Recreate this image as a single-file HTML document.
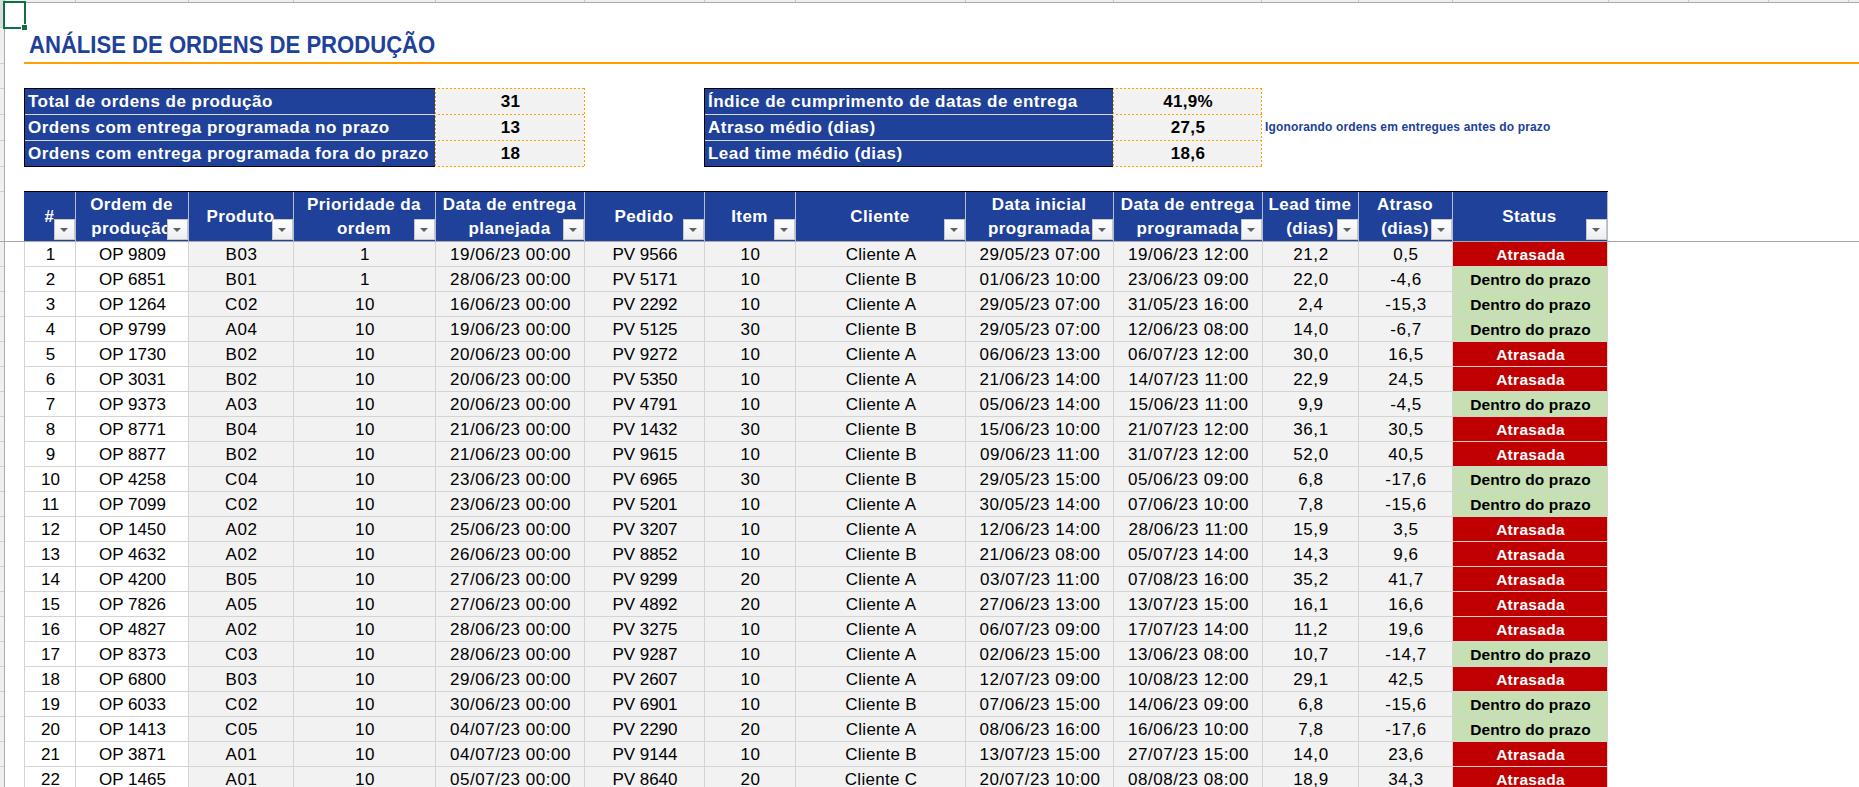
<!DOCTYPE html>
<html><head><meta charset="utf-8"><style>
html,body{margin:0;padding:0;background:#fff;}
body{width:1859px;height:787px;position:relative;overflow:hidden;font-family:"Liberation Sans", sans-serif;}
div{position:absolute;box-sizing:border-box;}
.t{white-space:pre;text-align:center;}
.title{font-weight:bold;font-size:23.5px;color:#20419a;white-space:pre;transform:scaleX(0.94);transform-origin:0 50%;}
.lab{font-weight:bold;font-size:17px;color:#fff;letter-spacing:0.47px;white-space:pre;}
.val{font-weight:bold;font-size:17px;color:#000;letter-spacing:0.3px;white-space:pre;text-align:center;}
.note{font-weight:bold;font-size:12px;color:#20419a;letter-spacing:0.15px;white-space:pre;}
.hd{font-weight:bold;font-size:17px;color:#fff;letter-spacing:0.4px;white-space:pre;text-align:center;line-height:24px;}
.d{font-size:17px;color:#000;letter-spacing:0.55px;white-space:pre;text-align:center;}
.da{font-size:17px;color:#000;white-space:pre;text-align:center;}
.st{font-weight:bold;font-size:15.5px;letter-spacing:0.3px;white-space:pre;text-align:center;}
.dash-h{height:1px;background:repeating-linear-gradient(90deg,#ffa000 0 1px,transparent 1px 3px,#ffa000 3px 4px);}
.dash-v{width:1px;background:repeating-linear-gradient(180deg,#ffa000 0 2px,transparent 2px 4px);}
.fb{width:21px;height:21px;border:1px solid #c6c6c6;background:linear-gradient(#ffffff,#eceef2);}
.fb::after{content:"";position:absolute;left:5px;top:7.5px;width:0;height:0;border-left:4px solid transparent;border-right:4px solid transparent;border-top:4.5px solid #606060;}
</style></head>
<body>
<div style="left:0px;top:0px;width:1859px;height:2px;background:#efefef"></div>
<div style="left:0px;top:2px;width:1859px;height:1px;background:#ababab"></div>
<div style="left:75px;top:0px;width:1px;height:2px;background:#c8c8c8"></div>
<div style="left:188px;top:0px;width:1px;height:2px;background:#c8c8c8"></div>
<div style="left:293px;top:0px;width:1px;height:2px;background:#c8c8c8"></div>
<div style="left:435px;top:0px;width:1px;height:2px;background:#c8c8c8"></div>
<div style="left:584px;top:0px;width:1px;height:2px;background:#c8c8c8"></div>
<div style="left:704px;top:0px;width:1px;height:2px;background:#c8c8c8"></div>
<div style="left:795px;top:0px;width:1px;height:2px;background:#c8c8c8"></div>
<div style="left:965px;top:0px;width:1px;height:2px;background:#c8c8c8"></div>
<div style="left:1113px;top:0px;width:1px;height:2px;background:#c8c8c8"></div>
<div style="left:1261px;top:0px;width:1px;height:2px;background:#c8c8c8"></div>
<div style="left:1358px;top:0px;width:1px;height:2px;background:#c8c8c8"></div>
<div style="left:1452px;top:0px;width:1px;height:2px;background:#c8c8c8"></div>
<div style="left:1608px;top:0px;width:1px;height:2px;background:#c8c8c8"></div>
<div style="left:1688px;top:0px;width:1px;height:2px;background:#c8c8c8"></div>
<div style="left:1768px;top:0px;width:1px;height:2px;background:#c8c8c8"></div>
<div style="left:1848px;top:0px;width:1px;height:2px;background:#c8c8c8"></div>
<div style="left:0px;top:0px;width:4px;height:787px;background:#efefef"></div>
<div style="left:0px;top:0px;width:4px;height:27px;background:#dcdcdc"></div>
<div style="left:0px;top:27px;width:4px;height:1px;background:#d0d0d0"></div>
<div style="left:0px;top:63px;width:4px;height:1px;background:#d0d0d0"></div>
<div style="left:0px;top:88px;width:4px;height:1px;background:#d0d0d0"></div>
<div style="left:0px;top:114px;width:4px;height:1px;background:#d0d0d0"></div>
<div style="left:0px;top:140px;width:4px;height:1px;background:#d0d0d0"></div>
<div style="left:0px;top:166px;width:4px;height:1px;background:#d0d0d0"></div>
<div style="left:0px;top:191px;width:4px;height:1px;background:#d0d0d0"></div>
<div style="left:0px;top:266px;width:4px;height:1px;background:#d0d0d0"></div>
<div style="left:0px;top:291px;width:4px;height:1px;background:#d0d0d0"></div>
<div style="left:0px;top:316px;width:4px;height:1px;background:#d0d0d0"></div>
<div style="left:0px;top:341px;width:4px;height:1px;background:#d0d0d0"></div>
<div style="left:0px;top:366px;width:4px;height:1px;background:#d0d0d0"></div>
<div style="left:0px;top:391px;width:4px;height:1px;background:#d0d0d0"></div>
<div style="left:0px;top:416px;width:4px;height:1px;background:#d0d0d0"></div>
<div style="left:0px;top:441px;width:4px;height:1px;background:#d0d0d0"></div>
<div style="left:0px;top:466px;width:4px;height:1px;background:#d0d0d0"></div>
<div style="left:0px;top:491px;width:4px;height:1px;background:#d0d0d0"></div>
<div style="left:0px;top:516px;width:4px;height:1px;background:#d0d0d0"></div>
<div style="left:0px;top:541px;width:4px;height:1px;background:#d0d0d0"></div>
<div style="left:0px;top:566px;width:4px;height:1px;background:#d0d0d0"></div>
<div style="left:0px;top:591px;width:4px;height:1px;background:#d0d0d0"></div>
<div style="left:0px;top:616px;width:4px;height:1px;background:#d0d0d0"></div>
<div style="left:0px;top:641px;width:4px;height:1px;background:#d0d0d0"></div>
<div style="left:0px;top:666px;width:4px;height:1px;background:#d0d0d0"></div>
<div style="left:0px;top:691px;width:4px;height:1px;background:#d0d0d0"></div>
<div style="left:0px;top:716px;width:4px;height:1px;background:#d0d0d0"></div>
<div style="left:0px;top:741px;width:4px;height:1px;background:#d0d0d0"></div>
<div style="left:0px;top:766px;width:4px;height:1px;background:#d0d0d0"></div>
<div style="left:4px;top:0px;width:1px;height:787px;background:#ababab"></div>
<div class="title" style="left:29px;top:28px;width:700px;height:35px;line-height:35px;">ANÁLISE DE ORDENS DE PRODUÇÃO</div>
<div style="left:24px;top:62px;width:1835px;height:2px;background:#ffa000"></div>
<div style="left:24px;top:88px;width:411px;height:79px;background:#20419a"></div>
<div style="left:24px;top:88px;width:411px;height:1px;background:#000"></div>
<div style="left:24px;top:166px;width:411px;height:1px;background:#000"></div>
<div style="left:24px;top:88px;width:1px;height:79px;background:#000"></div>
<div style="left:25px;top:114px;width:410px;height:1px;background:#d8d8e0"></div>
<div style="left:25px;top:140px;width:410px;height:1px;background:#d8d8e0"></div>
<div style="left:435px;top:88px;width:149px;height:79px;background:#f2f2f2"></div>
<div class="dash-h" style="left:435px;top:88px;width:150px"></div>
<div class="dash-h" style="left:435px;top:114px;width:150px"></div>
<div class="dash-h" style="left:435px;top:140px;width:150px"></div>
<div class="dash-h" style="left:435px;top:166px;width:150px"></div>
<div class="dash-v" style="left:435px;top:88px;height:79px;background-color:#fff"></div>
<div class="dash-v" style="left:584px;top:88px;height:79px"></div>
<div class="lab" style="left:28px;top:89px;width:407px;height:25px;line-height:25px;">Total de ordens de produção</div>
<div class="val" style="left:436px;top:89px;width:149px;height:25px;line-height:25px;">31</div>
<div class="lab" style="left:28px;top:115px;width:407px;height:25px;line-height:25px;">Ordens com entrega programada no prazo</div>
<div class="val" style="left:436px;top:115px;width:149px;height:25px;line-height:25px;">13</div>
<div class="lab" style="left:28px;top:141px;width:407px;height:25px;line-height:25px;">Ordens com entrega programada fora do prazo</div>
<div class="val" style="left:436px;top:141px;width:149px;height:25px;line-height:25px;">18</div>
<div style="left:704px;top:88px;width:409px;height:79px;background:#20419a"></div>
<div style="left:704px;top:88px;width:409px;height:1px;background:#000"></div>
<div style="left:704px;top:166px;width:409px;height:1px;background:#000"></div>
<div style="left:704px;top:88px;width:1px;height:79px;background:#000"></div>
<div style="left:705px;top:114px;width:408px;height:1px;background:#d8d8e0"></div>
<div style="left:705px;top:140px;width:408px;height:1px;background:#d8d8e0"></div>
<div style="left:1113px;top:88px;width:148px;height:79px;background:#f2f2f2"></div>
<div class="dash-h" style="left:1113px;top:88px;width:149px"></div>
<div class="dash-h" style="left:1113px;top:114px;width:149px"></div>
<div class="dash-h" style="left:1113px;top:140px;width:149px"></div>
<div class="dash-h" style="left:1113px;top:166px;width:149px"></div>
<div class="dash-v" style="left:1113px;top:88px;height:79px;background-color:#fff"></div>
<div class="dash-v" style="left:1261px;top:88px;height:79px"></div>
<div class="lab" style="left:708px;top:89px;width:405px;height:25px;line-height:25px;">Índice de cumprimento de datas de entrega</div>
<div class="val" style="left:1114px;top:89px;width:148px;height:25px;line-height:25px;">41,9%</div>
<div class="lab" style="left:708px;top:115px;width:405px;height:25px;line-height:25px;">Atraso médio (dias)</div>
<div class="val" style="left:1114px;top:115px;width:148px;height:25px;line-height:25px;">27,5</div>
<div class="lab" style="left:708px;top:141px;width:405px;height:25px;line-height:25px;">Lead time médio (dias)</div>
<div class="val" style="left:1114px;top:141px;width:148px;height:25px;line-height:25px;">18,6</div>
<div class="note" style="left:1265px;top:114px;width:400px;height:26px;line-height:26px;">Igonorando ordens em entregues antes do prazo</div>
<div style="left:0px;top:241px;width:1859px;height:1px;background:#a8a8a8"></div>
<div style="left:24px;top:191px;width:1584px;height:1px;background:#000"></div>
<div style="left:1607px;top:192px;width:1px;height:49px;background:#b4bcd6"></div>
<div style="left:24px;top:192px;width:1583px;height:49px;background:#20419a"></div>
<div class="hd" style="left:24px;top:193px;width:51px;height:48px;line-height:48px;line-height:48px">#</div>
<div class="fb" style="left:54px;top:219px"></div>
<div style="left:75px;top:192px;width:1px;height:49px;background:#b4bcd6"></div>
<div class="hd" style="left:75px;top:193px;width:113px;height:48px;line-height:48px;line-height:24px">Ordem de
produção</div>
<div class="fb" style="left:167px;top:219px"></div>
<div style="left:188px;top:192px;width:1px;height:49px;background:#b4bcd6"></div>
<div class="hd" style="left:188px;top:193px;width:105px;height:48px;line-height:48px;line-height:48px">Produto</div>
<div class="fb" style="left:272px;top:219px"></div>
<div style="left:293px;top:192px;width:1px;height:49px;background:#b4bcd6"></div>
<div class="hd" style="left:293px;top:193px;width:142px;height:48px;line-height:48px;line-height:24px">Prioridade da
ordem</div>
<div class="fb" style="left:414px;top:219px"></div>
<div style="left:435px;top:192px;width:1px;height:49px;background:#b4bcd6"></div>
<div class="hd" style="left:435px;top:193px;width:149px;height:48px;line-height:48px;line-height:24px">Data de entrega
planejada</div>
<div class="fb" style="left:563px;top:219px"></div>
<div style="left:584px;top:192px;width:1px;height:49px;background:#b4bcd6"></div>
<div class="hd" style="left:584px;top:193px;width:120px;height:48px;line-height:48px;line-height:48px">Pedido</div>
<div class="fb" style="left:683px;top:219px"></div>
<div style="left:704px;top:192px;width:1px;height:49px;background:#b4bcd6"></div>
<div class="hd" style="left:704px;top:193px;width:91px;height:48px;line-height:48px;line-height:48px">Item</div>
<div class="fb" style="left:774px;top:219px"></div>
<div style="left:795px;top:192px;width:1px;height:49px;background:#b4bcd6"></div>
<div class="hd" style="left:795px;top:193px;width:170px;height:48px;line-height:48px;line-height:48px">Cliente</div>
<div class="fb" style="left:944px;top:219px"></div>
<div style="left:965px;top:192px;width:1px;height:49px;background:#b4bcd6"></div>
<div class="hd" style="left:965px;top:193px;width:148px;height:48px;line-height:48px;line-height:24px">Data inicial
programada</div>
<div class="fb" style="left:1092px;top:219px"></div>
<div style="left:1113px;top:192px;width:1px;height:49px;background:#b4bcd6"></div>
<div class="hd" style="left:1113px;top:193px;width:149px;height:48px;line-height:48px;line-height:24px">Data de entrega
programada</div>
<div class="fb" style="left:1241px;top:219px"></div>
<div style="left:1262px;top:192px;width:1px;height:49px;background:#b4bcd6"></div>
<div class="hd" style="left:1262px;top:193px;width:96px;height:48px;line-height:48px;line-height:24px">Lead time
(dias)</div>
<div class="fb" style="left:1337px;top:219px"></div>
<div style="left:1358px;top:192px;width:1px;height:49px;background:#b4bcd6"></div>
<div class="hd" style="left:1358px;top:193px;width:94px;height:48px;line-height:48px;line-height:24px">Atraso
(dias)</div>
<div class="fb" style="left:1431px;top:219px"></div>
<div style="left:1452px;top:192px;width:1px;height:49px;background:#b4bcd6"></div>
<div class="hd" style="left:1452px;top:193px;width:155px;height:48px;line-height:48px;line-height:48px">Status</div>
<div class="fb" style="left:1586px;top:219px"></div>
<div style="left:25px;top:242px;width:50px;height:24px;background:#fff"></div>
<div class="da" style="left:25px;top:243px;width:51px;height:24px;line-height:24px;">1</div>
<div style="left:76px;top:242px;width:112px;height:24px;background:#fff"></div>
<div class="da" style="left:76px;top:243px;width:113px;height:24px;line-height:24px;">OP 9809</div>
<div style="left:189px;top:242px;width:104px;height:24px;background:#f2f2f2"></div>
<div class="d" style="left:189px;top:243px;width:105px;height:24px;line-height:24px;">B03</div>
<div style="left:294px;top:242px;width:141px;height:24px;background:#f2f2f2"></div>
<div class="d" style="left:294px;top:243px;width:142px;height:24px;line-height:24px;">1</div>
<div style="left:436px;top:242px;width:148px;height:24px;background:#f2f2f2"></div>
<div class="d" style="left:436px;top:243px;width:149px;height:24px;line-height:24px;">19/06/23 00:00</div>
<div style="left:585px;top:242px;width:119px;height:24px;background:#f2f2f2"></div>
<div class="d" style="left:585px;top:243px;width:120px;height:24px;line-height:24px;letter-spacing:-0.05px">PV 9566</div>
<div style="left:705px;top:242px;width:90px;height:24px;background:#f2f2f2"></div>
<div class="d" style="left:705px;top:243px;width:91px;height:24px;line-height:24px;">10</div>
<div style="left:796px;top:242px;width:169px;height:24px;background:#f2f2f2"></div>
<div class="d" style="left:796px;top:243px;width:170px;height:24px;line-height:24px;letter-spacing:0.28px">Cliente A</div>
<div style="left:966px;top:242px;width:147px;height:24px;background:#f2f2f2"></div>
<div class="d" style="left:966px;top:243px;width:148px;height:24px;line-height:24px;">29/05/23 07:00</div>
<div style="left:1114px;top:242px;width:148px;height:24px;background:#f2f2f2"></div>
<div class="d" style="left:1114px;top:243px;width:149px;height:24px;line-height:24px;">19/06/23 12:00</div>
<div style="left:1263px;top:242px;width:95px;height:24px;background:#f2f2f2"></div>
<div class="d" style="left:1263px;top:243px;width:96px;height:24px;line-height:24px;">21,2</div>
<div style="left:1359px;top:242px;width:93px;height:24px;background:#f2f2f2"></div>
<div class="d" style="left:1359px;top:243px;width:94px;height:24px;line-height:24px;">0,5</div>
<div style="left:1453px;top:242px;width:154px;height:24px;background:#c00000"></div>
<div class="st" style="left:1453px;top:243px;width:155px;height:24px;line-height:24px;color:#fff">Atrasada</div>
<div style="left:24px;top:266px;width:1584px;height:1px;background:#d4d4d4"></div>
<div style="left:25px;top:267px;width:50px;height:24px;background:#fff"></div>
<div class="da" style="left:25px;top:268px;width:51px;height:24px;line-height:24px;">2</div>
<div style="left:76px;top:267px;width:112px;height:24px;background:#fff"></div>
<div class="da" style="left:76px;top:268px;width:113px;height:24px;line-height:24px;">OP 6851</div>
<div style="left:189px;top:267px;width:104px;height:24px;background:#f2f2f2"></div>
<div class="d" style="left:189px;top:268px;width:105px;height:24px;line-height:24px;">B01</div>
<div style="left:294px;top:267px;width:141px;height:24px;background:#f2f2f2"></div>
<div class="d" style="left:294px;top:268px;width:142px;height:24px;line-height:24px;">1</div>
<div style="left:436px;top:267px;width:148px;height:24px;background:#f2f2f2"></div>
<div class="d" style="left:436px;top:268px;width:149px;height:24px;line-height:24px;">28/06/23 00:00</div>
<div style="left:585px;top:267px;width:119px;height:24px;background:#f2f2f2"></div>
<div class="d" style="left:585px;top:268px;width:120px;height:24px;line-height:24px;letter-spacing:-0.05px">PV 5171</div>
<div style="left:705px;top:267px;width:90px;height:24px;background:#f2f2f2"></div>
<div class="d" style="left:705px;top:268px;width:91px;height:24px;line-height:24px;">10</div>
<div style="left:796px;top:267px;width:169px;height:24px;background:#f2f2f2"></div>
<div class="d" style="left:796px;top:268px;width:170px;height:24px;line-height:24px;letter-spacing:0.28px">Cliente B</div>
<div style="left:966px;top:267px;width:147px;height:24px;background:#f2f2f2"></div>
<div class="d" style="left:966px;top:268px;width:148px;height:24px;line-height:24px;">01/06/23 10:00</div>
<div style="left:1114px;top:267px;width:148px;height:24px;background:#f2f2f2"></div>
<div class="d" style="left:1114px;top:268px;width:149px;height:24px;line-height:24px;">23/06/23 09:00</div>
<div style="left:1263px;top:267px;width:95px;height:24px;background:#f2f2f2"></div>
<div class="d" style="left:1263px;top:268px;width:96px;height:24px;line-height:24px;">22,0</div>
<div style="left:1359px;top:267px;width:93px;height:24px;background:#f2f2f2"></div>
<div class="d" style="left:1359px;top:268px;width:94px;height:24px;line-height:24px;">-4,6</div>
<div style="left:1453px;top:267px;width:154px;height:24px;background:#c6e0b4"></div>
<div class="st" style="left:1453px;top:268px;width:155px;height:24px;line-height:24px;color:#000;letter-spacing:0.12px">Dentro do prazo</div>
<div style="left:24px;top:291px;width:1584px;height:1px;background:#d4d4d4"></div>
<div style="left:25px;top:292px;width:50px;height:24px;background:#fff"></div>
<div class="da" style="left:25px;top:293px;width:51px;height:24px;line-height:24px;">3</div>
<div style="left:76px;top:292px;width:112px;height:24px;background:#fff"></div>
<div class="da" style="left:76px;top:293px;width:113px;height:24px;line-height:24px;">OP 1264</div>
<div style="left:189px;top:292px;width:104px;height:24px;background:#f2f2f2"></div>
<div class="d" style="left:189px;top:293px;width:105px;height:24px;line-height:24px;">C02</div>
<div style="left:294px;top:292px;width:141px;height:24px;background:#f2f2f2"></div>
<div class="d" style="left:294px;top:293px;width:142px;height:24px;line-height:24px;">10</div>
<div style="left:436px;top:292px;width:148px;height:24px;background:#f2f2f2"></div>
<div class="d" style="left:436px;top:293px;width:149px;height:24px;line-height:24px;">16/06/23 00:00</div>
<div style="left:585px;top:292px;width:119px;height:24px;background:#f2f2f2"></div>
<div class="d" style="left:585px;top:293px;width:120px;height:24px;line-height:24px;letter-spacing:-0.05px">PV 2292</div>
<div style="left:705px;top:292px;width:90px;height:24px;background:#f2f2f2"></div>
<div class="d" style="left:705px;top:293px;width:91px;height:24px;line-height:24px;">10</div>
<div style="left:796px;top:292px;width:169px;height:24px;background:#f2f2f2"></div>
<div class="d" style="left:796px;top:293px;width:170px;height:24px;line-height:24px;letter-spacing:0.28px">Cliente A</div>
<div style="left:966px;top:292px;width:147px;height:24px;background:#f2f2f2"></div>
<div class="d" style="left:966px;top:293px;width:148px;height:24px;line-height:24px;">29/05/23 07:00</div>
<div style="left:1114px;top:292px;width:148px;height:24px;background:#f2f2f2"></div>
<div class="d" style="left:1114px;top:293px;width:149px;height:24px;line-height:24px;">31/05/23 16:00</div>
<div style="left:1263px;top:292px;width:95px;height:24px;background:#f2f2f2"></div>
<div class="d" style="left:1263px;top:293px;width:96px;height:24px;line-height:24px;">2,4</div>
<div style="left:1359px;top:292px;width:93px;height:24px;background:#f2f2f2"></div>
<div class="d" style="left:1359px;top:293px;width:94px;height:24px;line-height:24px;">-15,3</div>
<div style="left:1453px;top:292px;width:154px;height:24px;background:#c6e0b4"></div>
<div class="st" style="left:1453px;top:293px;width:155px;height:24px;line-height:24px;color:#000;letter-spacing:0.12px">Dentro do prazo</div>
<div style="left:24px;top:316px;width:1584px;height:1px;background:#d4d4d4"></div>
<div style="left:25px;top:317px;width:50px;height:24px;background:#fff"></div>
<div class="da" style="left:25px;top:318px;width:51px;height:24px;line-height:24px;">4</div>
<div style="left:76px;top:317px;width:112px;height:24px;background:#fff"></div>
<div class="da" style="left:76px;top:318px;width:113px;height:24px;line-height:24px;">OP 9799</div>
<div style="left:189px;top:317px;width:104px;height:24px;background:#f2f2f2"></div>
<div class="d" style="left:189px;top:318px;width:105px;height:24px;line-height:24px;">A04</div>
<div style="left:294px;top:317px;width:141px;height:24px;background:#f2f2f2"></div>
<div class="d" style="left:294px;top:318px;width:142px;height:24px;line-height:24px;">10</div>
<div style="left:436px;top:317px;width:148px;height:24px;background:#f2f2f2"></div>
<div class="d" style="left:436px;top:318px;width:149px;height:24px;line-height:24px;">19/06/23 00:00</div>
<div style="left:585px;top:317px;width:119px;height:24px;background:#f2f2f2"></div>
<div class="d" style="left:585px;top:318px;width:120px;height:24px;line-height:24px;letter-spacing:-0.05px">PV 5125</div>
<div style="left:705px;top:317px;width:90px;height:24px;background:#f2f2f2"></div>
<div class="d" style="left:705px;top:318px;width:91px;height:24px;line-height:24px;">30</div>
<div style="left:796px;top:317px;width:169px;height:24px;background:#f2f2f2"></div>
<div class="d" style="left:796px;top:318px;width:170px;height:24px;line-height:24px;letter-spacing:0.28px">Cliente B</div>
<div style="left:966px;top:317px;width:147px;height:24px;background:#f2f2f2"></div>
<div class="d" style="left:966px;top:318px;width:148px;height:24px;line-height:24px;">29/05/23 07:00</div>
<div style="left:1114px;top:317px;width:148px;height:24px;background:#f2f2f2"></div>
<div class="d" style="left:1114px;top:318px;width:149px;height:24px;line-height:24px;">12/06/23 08:00</div>
<div style="left:1263px;top:317px;width:95px;height:24px;background:#f2f2f2"></div>
<div class="d" style="left:1263px;top:318px;width:96px;height:24px;line-height:24px;">14,0</div>
<div style="left:1359px;top:317px;width:93px;height:24px;background:#f2f2f2"></div>
<div class="d" style="left:1359px;top:318px;width:94px;height:24px;line-height:24px;">-6,7</div>
<div style="left:1453px;top:317px;width:154px;height:24px;background:#c6e0b4"></div>
<div class="st" style="left:1453px;top:318px;width:155px;height:24px;line-height:24px;color:#000;letter-spacing:0.12px">Dentro do prazo</div>
<div style="left:24px;top:341px;width:1584px;height:1px;background:#d4d4d4"></div>
<div style="left:25px;top:342px;width:50px;height:24px;background:#fff"></div>
<div class="da" style="left:25px;top:343px;width:51px;height:24px;line-height:24px;">5</div>
<div style="left:76px;top:342px;width:112px;height:24px;background:#fff"></div>
<div class="da" style="left:76px;top:343px;width:113px;height:24px;line-height:24px;">OP 1730</div>
<div style="left:189px;top:342px;width:104px;height:24px;background:#f2f2f2"></div>
<div class="d" style="left:189px;top:343px;width:105px;height:24px;line-height:24px;">B02</div>
<div style="left:294px;top:342px;width:141px;height:24px;background:#f2f2f2"></div>
<div class="d" style="left:294px;top:343px;width:142px;height:24px;line-height:24px;">10</div>
<div style="left:436px;top:342px;width:148px;height:24px;background:#f2f2f2"></div>
<div class="d" style="left:436px;top:343px;width:149px;height:24px;line-height:24px;">20/06/23 00:00</div>
<div style="left:585px;top:342px;width:119px;height:24px;background:#f2f2f2"></div>
<div class="d" style="left:585px;top:343px;width:120px;height:24px;line-height:24px;letter-spacing:-0.05px">PV 9272</div>
<div style="left:705px;top:342px;width:90px;height:24px;background:#f2f2f2"></div>
<div class="d" style="left:705px;top:343px;width:91px;height:24px;line-height:24px;">10</div>
<div style="left:796px;top:342px;width:169px;height:24px;background:#f2f2f2"></div>
<div class="d" style="left:796px;top:343px;width:170px;height:24px;line-height:24px;letter-spacing:0.28px">Cliente A</div>
<div style="left:966px;top:342px;width:147px;height:24px;background:#f2f2f2"></div>
<div class="d" style="left:966px;top:343px;width:148px;height:24px;line-height:24px;">06/06/23 13:00</div>
<div style="left:1114px;top:342px;width:148px;height:24px;background:#f2f2f2"></div>
<div class="d" style="left:1114px;top:343px;width:149px;height:24px;line-height:24px;">06/07/23 12:00</div>
<div style="left:1263px;top:342px;width:95px;height:24px;background:#f2f2f2"></div>
<div class="d" style="left:1263px;top:343px;width:96px;height:24px;line-height:24px;">30,0</div>
<div style="left:1359px;top:342px;width:93px;height:24px;background:#f2f2f2"></div>
<div class="d" style="left:1359px;top:343px;width:94px;height:24px;line-height:24px;">16,5</div>
<div style="left:1453px;top:342px;width:154px;height:24px;background:#c00000"></div>
<div class="st" style="left:1453px;top:343px;width:155px;height:24px;line-height:24px;color:#fff">Atrasada</div>
<div style="left:24px;top:366px;width:1584px;height:1px;background:#d4d4d4"></div>
<div style="left:25px;top:367px;width:50px;height:24px;background:#fff"></div>
<div class="da" style="left:25px;top:368px;width:51px;height:24px;line-height:24px;">6</div>
<div style="left:76px;top:367px;width:112px;height:24px;background:#fff"></div>
<div class="da" style="left:76px;top:368px;width:113px;height:24px;line-height:24px;">OP 3031</div>
<div style="left:189px;top:367px;width:104px;height:24px;background:#f2f2f2"></div>
<div class="d" style="left:189px;top:368px;width:105px;height:24px;line-height:24px;">B02</div>
<div style="left:294px;top:367px;width:141px;height:24px;background:#f2f2f2"></div>
<div class="d" style="left:294px;top:368px;width:142px;height:24px;line-height:24px;">10</div>
<div style="left:436px;top:367px;width:148px;height:24px;background:#f2f2f2"></div>
<div class="d" style="left:436px;top:368px;width:149px;height:24px;line-height:24px;">20/06/23 00:00</div>
<div style="left:585px;top:367px;width:119px;height:24px;background:#f2f2f2"></div>
<div class="d" style="left:585px;top:368px;width:120px;height:24px;line-height:24px;letter-spacing:-0.05px">PV 5350</div>
<div style="left:705px;top:367px;width:90px;height:24px;background:#f2f2f2"></div>
<div class="d" style="left:705px;top:368px;width:91px;height:24px;line-height:24px;">10</div>
<div style="left:796px;top:367px;width:169px;height:24px;background:#f2f2f2"></div>
<div class="d" style="left:796px;top:368px;width:170px;height:24px;line-height:24px;letter-spacing:0.28px">Cliente A</div>
<div style="left:966px;top:367px;width:147px;height:24px;background:#f2f2f2"></div>
<div class="d" style="left:966px;top:368px;width:148px;height:24px;line-height:24px;">21/06/23 14:00</div>
<div style="left:1114px;top:367px;width:148px;height:24px;background:#f2f2f2"></div>
<div class="d" style="left:1114px;top:368px;width:149px;height:24px;line-height:24px;">14/07/23 11:00</div>
<div style="left:1263px;top:367px;width:95px;height:24px;background:#f2f2f2"></div>
<div class="d" style="left:1263px;top:368px;width:96px;height:24px;line-height:24px;">22,9</div>
<div style="left:1359px;top:367px;width:93px;height:24px;background:#f2f2f2"></div>
<div class="d" style="left:1359px;top:368px;width:94px;height:24px;line-height:24px;">24,5</div>
<div style="left:1453px;top:367px;width:154px;height:24px;background:#c00000"></div>
<div class="st" style="left:1453px;top:368px;width:155px;height:24px;line-height:24px;color:#fff">Atrasada</div>
<div style="left:24px;top:391px;width:1584px;height:1px;background:#d4d4d4"></div>
<div style="left:25px;top:392px;width:50px;height:24px;background:#fff"></div>
<div class="da" style="left:25px;top:393px;width:51px;height:24px;line-height:24px;">7</div>
<div style="left:76px;top:392px;width:112px;height:24px;background:#fff"></div>
<div class="da" style="left:76px;top:393px;width:113px;height:24px;line-height:24px;">OP 9373</div>
<div style="left:189px;top:392px;width:104px;height:24px;background:#f2f2f2"></div>
<div class="d" style="left:189px;top:393px;width:105px;height:24px;line-height:24px;">A03</div>
<div style="left:294px;top:392px;width:141px;height:24px;background:#f2f2f2"></div>
<div class="d" style="left:294px;top:393px;width:142px;height:24px;line-height:24px;">10</div>
<div style="left:436px;top:392px;width:148px;height:24px;background:#f2f2f2"></div>
<div class="d" style="left:436px;top:393px;width:149px;height:24px;line-height:24px;">20/06/23 00:00</div>
<div style="left:585px;top:392px;width:119px;height:24px;background:#f2f2f2"></div>
<div class="d" style="left:585px;top:393px;width:120px;height:24px;line-height:24px;letter-spacing:-0.05px">PV 4791</div>
<div style="left:705px;top:392px;width:90px;height:24px;background:#f2f2f2"></div>
<div class="d" style="left:705px;top:393px;width:91px;height:24px;line-height:24px;">10</div>
<div style="left:796px;top:392px;width:169px;height:24px;background:#f2f2f2"></div>
<div class="d" style="left:796px;top:393px;width:170px;height:24px;line-height:24px;letter-spacing:0.28px">Cliente A</div>
<div style="left:966px;top:392px;width:147px;height:24px;background:#f2f2f2"></div>
<div class="d" style="left:966px;top:393px;width:148px;height:24px;line-height:24px;">05/06/23 14:00</div>
<div style="left:1114px;top:392px;width:148px;height:24px;background:#f2f2f2"></div>
<div class="d" style="left:1114px;top:393px;width:149px;height:24px;line-height:24px;">15/06/23 11:00</div>
<div style="left:1263px;top:392px;width:95px;height:24px;background:#f2f2f2"></div>
<div class="d" style="left:1263px;top:393px;width:96px;height:24px;line-height:24px;">9,9</div>
<div style="left:1359px;top:392px;width:93px;height:24px;background:#f2f2f2"></div>
<div class="d" style="left:1359px;top:393px;width:94px;height:24px;line-height:24px;">-4,5</div>
<div style="left:1453px;top:392px;width:154px;height:24px;background:#c6e0b4"></div>
<div class="st" style="left:1453px;top:393px;width:155px;height:24px;line-height:24px;color:#000;letter-spacing:0.12px">Dentro do prazo</div>
<div style="left:24px;top:416px;width:1584px;height:1px;background:#d4d4d4"></div>
<div style="left:25px;top:417px;width:50px;height:24px;background:#fff"></div>
<div class="da" style="left:25px;top:418px;width:51px;height:24px;line-height:24px;">8</div>
<div style="left:76px;top:417px;width:112px;height:24px;background:#fff"></div>
<div class="da" style="left:76px;top:418px;width:113px;height:24px;line-height:24px;">OP 8771</div>
<div style="left:189px;top:417px;width:104px;height:24px;background:#f2f2f2"></div>
<div class="d" style="left:189px;top:418px;width:105px;height:24px;line-height:24px;">B04</div>
<div style="left:294px;top:417px;width:141px;height:24px;background:#f2f2f2"></div>
<div class="d" style="left:294px;top:418px;width:142px;height:24px;line-height:24px;">10</div>
<div style="left:436px;top:417px;width:148px;height:24px;background:#f2f2f2"></div>
<div class="d" style="left:436px;top:418px;width:149px;height:24px;line-height:24px;">21/06/23 00:00</div>
<div style="left:585px;top:417px;width:119px;height:24px;background:#f2f2f2"></div>
<div class="d" style="left:585px;top:418px;width:120px;height:24px;line-height:24px;letter-spacing:-0.05px">PV 1432</div>
<div style="left:705px;top:417px;width:90px;height:24px;background:#f2f2f2"></div>
<div class="d" style="left:705px;top:418px;width:91px;height:24px;line-height:24px;">30</div>
<div style="left:796px;top:417px;width:169px;height:24px;background:#f2f2f2"></div>
<div class="d" style="left:796px;top:418px;width:170px;height:24px;line-height:24px;letter-spacing:0.28px">Cliente B</div>
<div style="left:966px;top:417px;width:147px;height:24px;background:#f2f2f2"></div>
<div class="d" style="left:966px;top:418px;width:148px;height:24px;line-height:24px;">15/06/23 10:00</div>
<div style="left:1114px;top:417px;width:148px;height:24px;background:#f2f2f2"></div>
<div class="d" style="left:1114px;top:418px;width:149px;height:24px;line-height:24px;">21/07/23 12:00</div>
<div style="left:1263px;top:417px;width:95px;height:24px;background:#f2f2f2"></div>
<div class="d" style="left:1263px;top:418px;width:96px;height:24px;line-height:24px;">36,1</div>
<div style="left:1359px;top:417px;width:93px;height:24px;background:#f2f2f2"></div>
<div class="d" style="left:1359px;top:418px;width:94px;height:24px;line-height:24px;">30,5</div>
<div style="left:1453px;top:417px;width:154px;height:24px;background:#c00000"></div>
<div class="st" style="left:1453px;top:418px;width:155px;height:24px;line-height:24px;color:#fff">Atrasada</div>
<div style="left:24px;top:441px;width:1584px;height:1px;background:#d4d4d4"></div>
<div style="left:25px;top:442px;width:50px;height:24px;background:#fff"></div>
<div class="da" style="left:25px;top:443px;width:51px;height:24px;line-height:24px;">9</div>
<div style="left:76px;top:442px;width:112px;height:24px;background:#fff"></div>
<div class="da" style="left:76px;top:443px;width:113px;height:24px;line-height:24px;">OP 8877</div>
<div style="left:189px;top:442px;width:104px;height:24px;background:#f2f2f2"></div>
<div class="d" style="left:189px;top:443px;width:105px;height:24px;line-height:24px;">B02</div>
<div style="left:294px;top:442px;width:141px;height:24px;background:#f2f2f2"></div>
<div class="d" style="left:294px;top:443px;width:142px;height:24px;line-height:24px;">10</div>
<div style="left:436px;top:442px;width:148px;height:24px;background:#f2f2f2"></div>
<div class="d" style="left:436px;top:443px;width:149px;height:24px;line-height:24px;">21/06/23 00:00</div>
<div style="left:585px;top:442px;width:119px;height:24px;background:#f2f2f2"></div>
<div class="d" style="left:585px;top:443px;width:120px;height:24px;line-height:24px;letter-spacing:-0.05px">PV 9615</div>
<div style="left:705px;top:442px;width:90px;height:24px;background:#f2f2f2"></div>
<div class="d" style="left:705px;top:443px;width:91px;height:24px;line-height:24px;">10</div>
<div style="left:796px;top:442px;width:169px;height:24px;background:#f2f2f2"></div>
<div class="d" style="left:796px;top:443px;width:170px;height:24px;line-height:24px;letter-spacing:0.28px">Cliente B</div>
<div style="left:966px;top:442px;width:147px;height:24px;background:#f2f2f2"></div>
<div class="d" style="left:966px;top:443px;width:148px;height:24px;line-height:24px;">09/06/23 11:00</div>
<div style="left:1114px;top:442px;width:148px;height:24px;background:#f2f2f2"></div>
<div class="d" style="left:1114px;top:443px;width:149px;height:24px;line-height:24px;">31/07/23 12:00</div>
<div style="left:1263px;top:442px;width:95px;height:24px;background:#f2f2f2"></div>
<div class="d" style="left:1263px;top:443px;width:96px;height:24px;line-height:24px;">52,0</div>
<div style="left:1359px;top:442px;width:93px;height:24px;background:#f2f2f2"></div>
<div class="d" style="left:1359px;top:443px;width:94px;height:24px;line-height:24px;">40,5</div>
<div style="left:1453px;top:442px;width:154px;height:24px;background:#c00000"></div>
<div class="st" style="left:1453px;top:443px;width:155px;height:24px;line-height:24px;color:#fff">Atrasada</div>
<div style="left:24px;top:466px;width:1584px;height:1px;background:#d4d4d4"></div>
<div style="left:25px;top:467px;width:50px;height:24px;background:#fff"></div>
<div class="da" style="left:25px;top:468px;width:51px;height:24px;line-height:24px;">10</div>
<div style="left:76px;top:467px;width:112px;height:24px;background:#fff"></div>
<div class="da" style="left:76px;top:468px;width:113px;height:24px;line-height:24px;">OP 4258</div>
<div style="left:189px;top:467px;width:104px;height:24px;background:#f2f2f2"></div>
<div class="d" style="left:189px;top:468px;width:105px;height:24px;line-height:24px;">C04</div>
<div style="left:294px;top:467px;width:141px;height:24px;background:#f2f2f2"></div>
<div class="d" style="left:294px;top:468px;width:142px;height:24px;line-height:24px;">10</div>
<div style="left:436px;top:467px;width:148px;height:24px;background:#f2f2f2"></div>
<div class="d" style="left:436px;top:468px;width:149px;height:24px;line-height:24px;">23/06/23 00:00</div>
<div style="left:585px;top:467px;width:119px;height:24px;background:#f2f2f2"></div>
<div class="d" style="left:585px;top:468px;width:120px;height:24px;line-height:24px;letter-spacing:-0.05px">PV 6965</div>
<div style="left:705px;top:467px;width:90px;height:24px;background:#f2f2f2"></div>
<div class="d" style="left:705px;top:468px;width:91px;height:24px;line-height:24px;">30</div>
<div style="left:796px;top:467px;width:169px;height:24px;background:#f2f2f2"></div>
<div class="d" style="left:796px;top:468px;width:170px;height:24px;line-height:24px;letter-spacing:0.28px">Cliente B</div>
<div style="left:966px;top:467px;width:147px;height:24px;background:#f2f2f2"></div>
<div class="d" style="left:966px;top:468px;width:148px;height:24px;line-height:24px;">29/05/23 15:00</div>
<div style="left:1114px;top:467px;width:148px;height:24px;background:#f2f2f2"></div>
<div class="d" style="left:1114px;top:468px;width:149px;height:24px;line-height:24px;">05/06/23 09:00</div>
<div style="left:1263px;top:467px;width:95px;height:24px;background:#f2f2f2"></div>
<div class="d" style="left:1263px;top:468px;width:96px;height:24px;line-height:24px;">6,8</div>
<div style="left:1359px;top:467px;width:93px;height:24px;background:#f2f2f2"></div>
<div class="d" style="left:1359px;top:468px;width:94px;height:24px;line-height:24px;">-17,6</div>
<div style="left:1453px;top:467px;width:154px;height:24px;background:#c6e0b4"></div>
<div class="st" style="left:1453px;top:468px;width:155px;height:24px;line-height:24px;color:#000;letter-spacing:0.12px">Dentro do prazo</div>
<div style="left:24px;top:491px;width:1584px;height:1px;background:#d4d4d4"></div>
<div style="left:25px;top:492px;width:50px;height:24px;background:#fff"></div>
<div class="da" style="left:25px;top:493px;width:51px;height:24px;line-height:24px;">11</div>
<div style="left:76px;top:492px;width:112px;height:24px;background:#fff"></div>
<div class="da" style="left:76px;top:493px;width:113px;height:24px;line-height:24px;">OP 7099</div>
<div style="left:189px;top:492px;width:104px;height:24px;background:#f2f2f2"></div>
<div class="d" style="left:189px;top:493px;width:105px;height:24px;line-height:24px;">C02</div>
<div style="left:294px;top:492px;width:141px;height:24px;background:#f2f2f2"></div>
<div class="d" style="left:294px;top:493px;width:142px;height:24px;line-height:24px;">10</div>
<div style="left:436px;top:492px;width:148px;height:24px;background:#f2f2f2"></div>
<div class="d" style="left:436px;top:493px;width:149px;height:24px;line-height:24px;">23/06/23 00:00</div>
<div style="left:585px;top:492px;width:119px;height:24px;background:#f2f2f2"></div>
<div class="d" style="left:585px;top:493px;width:120px;height:24px;line-height:24px;letter-spacing:-0.05px">PV 5201</div>
<div style="left:705px;top:492px;width:90px;height:24px;background:#f2f2f2"></div>
<div class="d" style="left:705px;top:493px;width:91px;height:24px;line-height:24px;">10</div>
<div style="left:796px;top:492px;width:169px;height:24px;background:#f2f2f2"></div>
<div class="d" style="left:796px;top:493px;width:170px;height:24px;line-height:24px;letter-spacing:0.28px">Cliente A</div>
<div style="left:966px;top:492px;width:147px;height:24px;background:#f2f2f2"></div>
<div class="d" style="left:966px;top:493px;width:148px;height:24px;line-height:24px;">30/05/23 14:00</div>
<div style="left:1114px;top:492px;width:148px;height:24px;background:#f2f2f2"></div>
<div class="d" style="left:1114px;top:493px;width:149px;height:24px;line-height:24px;">07/06/23 10:00</div>
<div style="left:1263px;top:492px;width:95px;height:24px;background:#f2f2f2"></div>
<div class="d" style="left:1263px;top:493px;width:96px;height:24px;line-height:24px;">7,8</div>
<div style="left:1359px;top:492px;width:93px;height:24px;background:#f2f2f2"></div>
<div class="d" style="left:1359px;top:493px;width:94px;height:24px;line-height:24px;">-15,6</div>
<div style="left:1453px;top:492px;width:154px;height:24px;background:#c6e0b4"></div>
<div class="st" style="left:1453px;top:493px;width:155px;height:24px;line-height:24px;color:#000;letter-spacing:0.12px">Dentro do prazo</div>
<div style="left:24px;top:516px;width:1584px;height:1px;background:#d4d4d4"></div>
<div style="left:25px;top:517px;width:50px;height:24px;background:#fff"></div>
<div class="da" style="left:25px;top:518px;width:51px;height:24px;line-height:24px;">12</div>
<div style="left:76px;top:517px;width:112px;height:24px;background:#fff"></div>
<div class="da" style="left:76px;top:518px;width:113px;height:24px;line-height:24px;">OP 1450</div>
<div style="left:189px;top:517px;width:104px;height:24px;background:#f2f2f2"></div>
<div class="d" style="left:189px;top:518px;width:105px;height:24px;line-height:24px;">A02</div>
<div style="left:294px;top:517px;width:141px;height:24px;background:#f2f2f2"></div>
<div class="d" style="left:294px;top:518px;width:142px;height:24px;line-height:24px;">10</div>
<div style="left:436px;top:517px;width:148px;height:24px;background:#f2f2f2"></div>
<div class="d" style="left:436px;top:518px;width:149px;height:24px;line-height:24px;">25/06/23 00:00</div>
<div style="left:585px;top:517px;width:119px;height:24px;background:#f2f2f2"></div>
<div class="d" style="left:585px;top:518px;width:120px;height:24px;line-height:24px;letter-spacing:-0.05px">PV 3207</div>
<div style="left:705px;top:517px;width:90px;height:24px;background:#f2f2f2"></div>
<div class="d" style="left:705px;top:518px;width:91px;height:24px;line-height:24px;">10</div>
<div style="left:796px;top:517px;width:169px;height:24px;background:#f2f2f2"></div>
<div class="d" style="left:796px;top:518px;width:170px;height:24px;line-height:24px;letter-spacing:0.28px">Cliente A</div>
<div style="left:966px;top:517px;width:147px;height:24px;background:#f2f2f2"></div>
<div class="d" style="left:966px;top:518px;width:148px;height:24px;line-height:24px;">12/06/23 14:00</div>
<div style="left:1114px;top:517px;width:148px;height:24px;background:#f2f2f2"></div>
<div class="d" style="left:1114px;top:518px;width:149px;height:24px;line-height:24px;">28/06/23 11:00</div>
<div style="left:1263px;top:517px;width:95px;height:24px;background:#f2f2f2"></div>
<div class="d" style="left:1263px;top:518px;width:96px;height:24px;line-height:24px;">15,9</div>
<div style="left:1359px;top:517px;width:93px;height:24px;background:#f2f2f2"></div>
<div class="d" style="left:1359px;top:518px;width:94px;height:24px;line-height:24px;">3,5</div>
<div style="left:1453px;top:517px;width:154px;height:24px;background:#c00000"></div>
<div class="st" style="left:1453px;top:518px;width:155px;height:24px;line-height:24px;color:#fff">Atrasada</div>
<div style="left:24px;top:541px;width:1584px;height:1px;background:#d4d4d4"></div>
<div style="left:25px;top:542px;width:50px;height:24px;background:#fff"></div>
<div class="da" style="left:25px;top:543px;width:51px;height:24px;line-height:24px;">13</div>
<div style="left:76px;top:542px;width:112px;height:24px;background:#fff"></div>
<div class="da" style="left:76px;top:543px;width:113px;height:24px;line-height:24px;">OP 4632</div>
<div style="left:189px;top:542px;width:104px;height:24px;background:#f2f2f2"></div>
<div class="d" style="left:189px;top:543px;width:105px;height:24px;line-height:24px;">A02</div>
<div style="left:294px;top:542px;width:141px;height:24px;background:#f2f2f2"></div>
<div class="d" style="left:294px;top:543px;width:142px;height:24px;line-height:24px;">10</div>
<div style="left:436px;top:542px;width:148px;height:24px;background:#f2f2f2"></div>
<div class="d" style="left:436px;top:543px;width:149px;height:24px;line-height:24px;">26/06/23 00:00</div>
<div style="left:585px;top:542px;width:119px;height:24px;background:#f2f2f2"></div>
<div class="d" style="left:585px;top:543px;width:120px;height:24px;line-height:24px;letter-spacing:-0.05px">PV 8852</div>
<div style="left:705px;top:542px;width:90px;height:24px;background:#f2f2f2"></div>
<div class="d" style="left:705px;top:543px;width:91px;height:24px;line-height:24px;">10</div>
<div style="left:796px;top:542px;width:169px;height:24px;background:#f2f2f2"></div>
<div class="d" style="left:796px;top:543px;width:170px;height:24px;line-height:24px;letter-spacing:0.28px">Cliente B</div>
<div style="left:966px;top:542px;width:147px;height:24px;background:#f2f2f2"></div>
<div class="d" style="left:966px;top:543px;width:148px;height:24px;line-height:24px;">21/06/23 08:00</div>
<div style="left:1114px;top:542px;width:148px;height:24px;background:#f2f2f2"></div>
<div class="d" style="left:1114px;top:543px;width:149px;height:24px;line-height:24px;">05/07/23 14:00</div>
<div style="left:1263px;top:542px;width:95px;height:24px;background:#f2f2f2"></div>
<div class="d" style="left:1263px;top:543px;width:96px;height:24px;line-height:24px;">14,3</div>
<div style="left:1359px;top:542px;width:93px;height:24px;background:#f2f2f2"></div>
<div class="d" style="left:1359px;top:543px;width:94px;height:24px;line-height:24px;">9,6</div>
<div style="left:1453px;top:542px;width:154px;height:24px;background:#c00000"></div>
<div class="st" style="left:1453px;top:543px;width:155px;height:24px;line-height:24px;color:#fff">Atrasada</div>
<div style="left:24px;top:566px;width:1584px;height:1px;background:#d4d4d4"></div>
<div style="left:25px;top:567px;width:50px;height:24px;background:#fff"></div>
<div class="da" style="left:25px;top:568px;width:51px;height:24px;line-height:24px;">14</div>
<div style="left:76px;top:567px;width:112px;height:24px;background:#fff"></div>
<div class="da" style="left:76px;top:568px;width:113px;height:24px;line-height:24px;">OP 4200</div>
<div style="left:189px;top:567px;width:104px;height:24px;background:#f2f2f2"></div>
<div class="d" style="left:189px;top:568px;width:105px;height:24px;line-height:24px;">B05</div>
<div style="left:294px;top:567px;width:141px;height:24px;background:#f2f2f2"></div>
<div class="d" style="left:294px;top:568px;width:142px;height:24px;line-height:24px;">10</div>
<div style="left:436px;top:567px;width:148px;height:24px;background:#f2f2f2"></div>
<div class="d" style="left:436px;top:568px;width:149px;height:24px;line-height:24px;">27/06/23 00:00</div>
<div style="left:585px;top:567px;width:119px;height:24px;background:#f2f2f2"></div>
<div class="d" style="left:585px;top:568px;width:120px;height:24px;line-height:24px;letter-spacing:-0.05px">PV 9299</div>
<div style="left:705px;top:567px;width:90px;height:24px;background:#f2f2f2"></div>
<div class="d" style="left:705px;top:568px;width:91px;height:24px;line-height:24px;">20</div>
<div style="left:796px;top:567px;width:169px;height:24px;background:#f2f2f2"></div>
<div class="d" style="left:796px;top:568px;width:170px;height:24px;line-height:24px;letter-spacing:0.28px">Cliente A</div>
<div style="left:966px;top:567px;width:147px;height:24px;background:#f2f2f2"></div>
<div class="d" style="left:966px;top:568px;width:148px;height:24px;line-height:24px;">03/07/23 11:00</div>
<div style="left:1114px;top:567px;width:148px;height:24px;background:#f2f2f2"></div>
<div class="d" style="left:1114px;top:568px;width:149px;height:24px;line-height:24px;">07/08/23 16:00</div>
<div style="left:1263px;top:567px;width:95px;height:24px;background:#f2f2f2"></div>
<div class="d" style="left:1263px;top:568px;width:96px;height:24px;line-height:24px;">35,2</div>
<div style="left:1359px;top:567px;width:93px;height:24px;background:#f2f2f2"></div>
<div class="d" style="left:1359px;top:568px;width:94px;height:24px;line-height:24px;">41,7</div>
<div style="left:1453px;top:567px;width:154px;height:24px;background:#c00000"></div>
<div class="st" style="left:1453px;top:568px;width:155px;height:24px;line-height:24px;color:#fff">Atrasada</div>
<div style="left:24px;top:591px;width:1584px;height:1px;background:#d4d4d4"></div>
<div style="left:25px;top:592px;width:50px;height:24px;background:#fff"></div>
<div class="da" style="left:25px;top:593px;width:51px;height:24px;line-height:24px;">15</div>
<div style="left:76px;top:592px;width:112px;height:24px;background:#fff"></div>
<div class="da" style="left:76px;top:593px;width:113px;height:24px;line-height:24px;">OP 7826</div>
<div style="left:189px;top:592px;width:104px;height:24px;background:#f2f2f2"></div>
<div class="d" style="left:189px;top:593px;width:105px;height:24px;line-height:24px;">A05</div>
<div style="left:294px;top:592px;width:141px;height:24px;background:#f2f2f2"></div>
<div class="d" style="left:294px;top:593px;width:142px;height:24px;line-height:24px;">10</div>
<div style="left:436px;top:592px;width:148px;height:24px;background:#f2f2f2"></div>
<div class="d" style="left:436px;top:593px;width:149px;height:24px;line-height:24px;">27/06/23 00:00</div>
<div style="left:585px;top:592px;width:119px;height:24px;background:#f2f2f2"></div>
<div class="d" style="left:585px;top:593px;width:120px;height:24px;line-height:24px;letter-spacing:-0.05px">PV 4892</div>
<div style="left:705px;top:592px;width:90px;height:24px;background:#f2f2f2"></div>
<div class="d" style="left:705px;top:593px;width:91px;height:24px;line-height:24px;">20</div>
<div style="left:796px;top:592px;width:169px;height:24px;background:#f2f2f2"></div>
<div class="d" style="left:796px;top:593px;width:170px;height:24px;line-height:24px;letter-spacing:0.28px">Cliente A</div>
<div style="left:966px;top:592px;width:147px;height:24px;background:#f2f2f2"></div>
<div class="d" style="left:966px;top:593px;width:148px;height:24px;line-height:24px;">27/06/23 13:00</div>
<div style="left:1114px;top:592px;width:148px;height:24px;background:#f2f2f2"></div>
<div class="d" style="left:1114px;top:593px;width:149px;height:24px;line-height:24px;">13/07/23 15:00</div>
<div style="left:1263px;top:592px;width:95px;height:24px;background:#f2f2f2"></div>
<div class="d" style="left:1263px;top:593px;width:96px;height:24px;line-height:24px;">16,1</div>
<div style="left:1359px;top:592px;width:93px;height:24px;background:#f2f2f2"></div>
<div class="d" style="left:1359px;top:593px;width:94px;height:24px;line-height:24px;">16,6</div>
<div style="left:1453px;top:592px;width:154px;height:24px;background:#c00000"></div>
<div class="st" style="left:1453px;top:593px;width:155px;height:24px;line-height:24px;color:#fff">Atrasada</div>
<div style="left:24px;top:616px;width:1584px;height:1px;background:#d4d4d4"></div>
<div style="left:25px;top:617px;width:50px;height:24px;background:#fff"></div>
<div class="da" style="left:25px;top:618px;width:51px;height:24px;line-height:24px;">16</div>
<div style="left:76px;top:617px;width:112px;height:24px;background:#fff"></div>
<div class="da" style="left:76px;top:618px;width:113px;height:24px;line-height:24px;">OP 4827</div>
<div style="left:189px;top:617px;width:104px;height:24px;background:#f2f2f2"></div>
<div class="d" style="left:189px;top:618px;width:105px;height:24px;line-height:24px;">A02</div>
<div style="left:294px;top:617px;width:141px;height:24px;background:#f2f2f2"></div>
<div class="d" style="left:294px;top:618px;width:142px;height:24px;line-height:24px;">10</div>
<div style="left:436px;top:617px;width:148px;height:24px;background:#f2f2f2"></div>
<div class="d" style="left:436px;top:618px;width:149px;height:24px;line-height:24px;">28/06/23 00:00</div>
<div style="left:585px;top:617px;width:119px;height:24px;background:#f2f2f2"></div>
<div class="d" style="left:585px;top:618px;width:120px;height:24px;line-height:24px;letter-spacing:-0.05px">PV 3275</div>
<div style="left:705px;top:617px;width:90px;height:24px;background:#f2f2f2"></div>
<div class="d" style="left:705px;top:618px;width:91px;height:24px;line-height:24px;">10</div>
<div style="left:796px;top:617px;width:169px;height:24px;background:#f2f2f2"></div>
<div class="d" style="left:796px;top:618px;width:170px;height:24px;line-height:24px;letter-spacing:0.28px">Cliente A</div>
<div style="left:966px;top:617px;width:147px;height:24px;background:#f2f2f2"></div>
<div class="d" style="left:966px;top:618px;width:148px;height:24px;line-height:24px;">06/07/23 09:00</div>
<div style="left:1114px;top:617px;width:148px;height:24px;background:#f2f2f2"></div>
<div class="d" style="left:1114px;top:618px;width:149px;height:24px;line-height:24px;">17/07/23 14:00</div>
<div style="left:1263px;top:617px;width:95px;height:24px;background:#f2f2f2"></div>
<div class="d" style="left:1263px;top:618px;width:96px;height:24px;line-height:24px;">11,2</div>
<div style="left:1359px;top:617px;width:93px;height:24px;background:#f2f2f2"></div>
<div class="d" style="left:1359px;top:618px;width:94px;height:24px;line-height:24px;">19,6</div>
<div style="left:1453px;top:617px;width:154px;height:24px;background:#c00000"></div>
<div class="st" style="left:1453px;top:618px;width:155px;height:24px;line-height:24px;color:#fff">Atrasada</div>
<div style="left:24px;top:641px;width:1584px;height:1px;background:#d4d4d4"></div>
<div style="left:25px;top:642px;width:50px;height:24px;background:#fff"></div>
<div class="da" style="left:25px;top:643px;width:51px;height:24px;line-height:24px;">17</div>
<div style="left:76px;top:642px;width:112px;height:24px;background:#fff"></div>
<div class="da" style="left:76px;top:643px;width:113px;height:24px;line-height:24px;">OP 8373</div>
<div style="left:189px;top:642px;width:104px;height:24px;background:#f2f2f2"></div>
<div class="d" style="left:189px;top:643px;width:105px;height:24px;line-height:24px;">C03</div>
<div style="left:294px;top:642px;width:141px;height:24px;background:#f2f2f2"></div>
<div class="d" style="left:294px;top:643px;width:142px;height:24px;line-height:24px;">10</div>
<div style="left:436px;top:642px;width:148px;height:24px;background:#f2f2f2"></div>
<div class="d" style="left:436px;top:643px;width:149px;height:24px;line-height:24px;">28/06/23 00:00</div>
<div style="left:585px;top:642px;width:119px;height:24px;background:#f2f2f2"></div>
<div class="d" style="left:585px;top:643px;width:120px;height:24px;line-height:24px;letter-spacing:-0.05px">PV 9287</div>
<div style="left:705px;top:642px;width:90px;height:24px;background:#f2f2f2"></div>
<div class="d" style="left:705px;top:643px;width:91px;height:24px;line-height:24px;">10</div>
<div style="left:796px;top:642px;width:169px;height:24px;background:#f2f2f2"></div>
<div class="d" style="left:796px;top:643px;width:170px;height:24px;line-height:24px;letter-spacing:0.28px">Cliente A</div>
<div style="left:966px;top:642px;width:147px;height:24px;background:#f2f2f2"></div>
<div class="d" style="left:966px;top:643px;width:148px;height:24px;line-height:24px;">02/06/23 15:00</div>
<div style="left:1114px;top:642px;width:148px;height:24px;background:#f2f2f2"></div>
<div class="d" style="left:1114px;top:643px;width:149px;height:24px;line-height:24px;">13/06/23 08:00</div>
<div style="left:1263px;top:642px;width:95px;height:24px;background:#f2f2f2"></div>
<div class="d" style="left:1263px;top:643px;width:96px;height:24px;line-height:24px;">10,7</div>
<div style="left:1359px;top:642px;width:93px;height:24px;background:#f2f2f2"></div>
<div class="d" style="left:1359px;top:643px;width:94px;height:24px;line-height:24px;">-14,7</div>
<div style="left:1453px;top:642px;width:154px;height:24px;background:#c6e0b4"></div>
<div class="st" style="left:1453px;top:643px;width:155px;height:24px;line-height:24px;color:#000;letter-spacing:0.12px">Dentro do prazo</div>
<div style="left:24px;top:666px;width:1584px;height:1px;background:#d4d4d4"></div>
<div style="left:25px;top:667px;width:50px;height:24px;background:#fff"></div>
<div class="da" style="left:25px;top:668px;width:51px;height:24px;line-height:24px;">18</div>
<div style="left:76px;top:667px;width:112px;height:24px;background:#fff"></div>
<div class="da" style="left:76px;top:668px;width:113px;height:24px;line-height:24px;">OP 6800</div>
<div style="left:189px;top:667px;width:104px;height:24px;background:#f2f2f2"></div>
<div class="d" style="left:189px;top:668px;width:105px;height:24px;line-height:24px;">B03</div>
<div style="left:294px;top:667px;width:141px;height:24px;background:#f2f2f2"></div>
<div class="d" style="left:294px;top:668px;width:142px;height:24px;line-height:24px;">10</div>
<div style="left:436px;top:667px;width:148px;height:24px;background:#f2f2f2"></div>
<div class="d" style="left:436px;top:668px;width:149px;height:24px;line-height:24px;">29/06/23 00:00</div>
<div style="left:585px;top:667px;width:119px;height:24px;background:#f2f2f2"></div>
<div class="d" style="left:585px;top:668px;width:120px;height:24px;line-height:24px;letter-spacing:-0.05px">PV 2607</div>
<div style="left:705px;top:667px;width:90px;height:24px;background:#f2f2f2"></div>
<div class="d" style="left:705px;top:668px;width:91px;height:24px;line-height:24px;">10</div>
<div style="left:796px;top:667px;width:169px;height:24px;background:#f2f2f2"></div>
<div class="d" style="left:796px;top:668px;width:170px;height:24px;line-height:24px;letter-spacing:0.28px">Cliente A</div>
<div style="left:966px;top:667px;width:147px;height:24px;background:#f2f2f2"></div>
<div class="d" style="left:966px;top:668px;width:148px;height:24px;line-height:24px;">12/07/23 09:00</div>
<div style="left:1114px;top:667px;width:148px;height:24px;background:#f2f2f2"></div>
<div class="d" style="left:1114px;top:668px;width:149px;height:24px;line-height:24px;">10/08/23 12:00</div>
<div style="left:1263px;top:667px;width:95px;height:24px;background:#f2f2f2"></div>
<div class="d" style="left:1263px;top:668px;width:96px;height:24px;line-height:24px;">29,1</div>
<div style="left:1359px;top:667px;width:93px;height:24px;background:#f2f2f2"></div>
<div class="d" style="left:1359px;top:668px;width:94px;height:24px;line-height:24px;">42,5</div>
<div style="left:1453px;top:667px;width:154px;height:24px;background:#c00000"></div>
<div class="st" style="left:1453px;top:668px;width:155px;height:24px;line-height:24px;color:#fff">Atrasada</div>
<div style="left:24px;top:691px;width:1584px;height:1px;background:#d4d4d4"></div>
<div style="left:25px;top:692px;width:50px;height:24px;background:#fff"></div>
<div class="da" style="left:25px;top:693px;width:51px;height:24px;line-height:24px;">19</div>
<div style="left:76px;top:692px;width:112px;height:24px;background:#fff"></div>
<div class="da" style="left:76px;top:693px;width:113px;height:24px;line-height:24px;">OP 6033</div>
<div style="left:189px;top:692px;width:104px;height:24px;background:#f2f2f2"></div>
<div class="d" style="left:189px;top:693px;width:105px;height:24px;line-height:24px;">C02</div>
<div style="left:294px;top:692px;width:141px;height:24px;background:#f2f2f2"></div>
<div class="d" style="left:294px;top:693px;width:142px;height:24px;line-height:24px;">10</div>
<div style="left:436px;top:692px;width:148px;height:24px;background:#f2f2f2"></div>
<div class="d" style="left:436px;top:693px;width:149px;height:24px;line-height:24px;">30/06/23 00:00</div>
<div style="left:585px;top:692px;width:119px;height:24px;background:#f2f2f2"></div>
<div class="d" style="left:585px;top:693px;width:120px;height:24px;line-height:24px;letter-spacing:-0.05px">PV 6901</div>
<div style="left:705px;top:692px;width:90px;height:24px;background:#f2f2f2"></div>
<div class="d" style="left:705px;top:693px;width:91px;height:24px;line-height:24px;">10</div>
<div style="left:796px;top:692px;width:169px;height:24px;background:#f2f2f2"></div>
<div class="d" style="left:796px;top:693px;width:170px;height:24px;line-height:24px;letter-spacing:0.28px">Cliente B</div>
<div style="left:966px;top:692px;width:147px;height:24px;background:#f2f2f2"></div>
<div class="d" style="left:966px;top:693px;width:148px;height:24px;line-height:24px;">07/06/23 15:00</div>
<div style="left:1114px;top:692px;width:148px;height:24px;background:#f2f2f2"></div>
<div class="d" style="left:1114px;top:693px;width:149px;height:24px;line-height:24px;">14/06/23 09:00</div>
<div style="left:1263px;top:692px;width:95px;height:24px;background:#f2f2f2"></div>
<div class="d" style="left:1263px;top:693px;width:96px;height:24px;line-height:24px;">6,8</div>
<div style="left:1359px;top:692px;width:93px;height:24px;background:#f2f2f2"></div>
<div class="d" style="left:1359px;top:693px;width:94px;height:24px;line-height:24px;">-15,6</div>
<div style="left:1453px;top:692px;width:154px;height:24px;background:#c6e0b4"></div>
<div class="st" style="left:1453px;top:693px;width:155px;height:24px;line-height:24px;color:#000;letter-spacing:0.12px">Dentro do prazo</div>
<div style="left:24px;top:716px;width:1584px;height:1px;background:#d4d4d4"></div>
<div style="left:25px;top:717px;width:50px;height:24px;background:#fff"></div>
<div class="da" style="left:25px;top:718px;width:51px;height:24px;line-height:24px;">20</div>
<div style="left:76px;top:717px;width:112px;height:24px;background:#fff"></div>
<div class="da" style="left:76px;top:718px;width:113px;height:24px;line-height:24px;">OP 1413</div>
<div style="left:189px;top:717px;width:104px;height:24px;background:#f2f2f2"></div>
<div class="d" style="left:189px;top:718px;width:105px;height:24px;line-height:24px;">C05</div>
<div style="left:294px;top:717px;width:141px;height:24px;background:#f2f2f2"></div>
<div class="d" style="left:294px;top:718px;width:142px;height:24px;line-height:24px;">10</div>
<div style="left:436px;top:717px;width:148px;height:24px;background:#f2f2f2"></div>
<div class="d" style="left:436px;top:718px;width:149px;height:24px;line-height:24px;">04/07/23 00:00</div>
<div style="left:585px;top:717px;width:119px;height:24px;background:#f2f2f2"></div>
<div class="d" style="left:585px;top:718px;width:120px;height:24px;line-height:24px;letter-spacing:-0.05px">PV 2290</div>
<div style="left:705px;top:717px;width:90px;height:24px;background:#f2f2f2"></div>
<div class="d" style="left:705px;top:718px;width:91px;height:24px;line-height:24px;">20</div>
<div style="left:796px;top:717px;width:169px;height:24px;background:#f2f2f2"></div>
<div class="d" style="left:796px;top:718px;width:170px;height:24px;line-height:24px;letter-spacing:0.28px">Cliente A</div>
<div style="left:966px;top:717px;width:147px;height:24px;background:#f2f2f2"></div>
<div class="d" style="left:966px;top:718px;width:148px;height:24px;line-height:24px;">08/06/23 16:00</div>
<div style="left:1114px;top:717px;width:148px;height:24px;background:#f2f2f2"></div>
<div class="d" style="left:1114px;top:718px;width:149px;height:24px;line-height:24px;">16/06/23 10:00</div>
<div style="left:1263px;top:717px;width:95px;height:24px;background:#f2f2f2"></div>
<div class="d" style="left:1263px;top:718px;width:96px;height:24px;line-height:24px;">7,8</div>
<div style="left:1359px;top:717px;width:93px;height:24px;background:#f2f2f2"></div>
<div class="d" style="left:1359px;top:718px;width:94px;height:24px;line-height:24px;">-17,6</div>
<div style="left:1453px;top:717px;width:154px;height:24px;background:#c6e0b4"></div>
<div class="st" style="left:1453px;top:718px;width:155px;height:24px;line-height:24px;color:#000;letter-spacing:0.12px">Dentro do prazo</div>
<div style="left:24px;top:741px;width:1584px;height:1px;background:#d4d4d4"></div>
<div style="left:25px;top:742px;width:50px;height:24px;background:#fff"></div>
<div class="da" style="left:25px;top:743px;width:51px;height:24px;line-height:24px;">21</div>
<div style="left:76px;top:742px;width:112px;height:24px;background:#fff"></div>
<div class="da" style="left:76px;top:743px;width:113px;height:24px;line-height:24px;">OP 3871</div>
<div style="left:189px;top:742px;width:104px;height:24px;background:#f2f2f2"></div>
<div class="d" style="left:189px;top:743px;width:105px;height:24px;line-height:24px;">A01</div>
<div style="left:294px;top:742px;width:141px;height:24px;background:#f2f2f2"></div>
<div class="d" style="left:294px;top:743px;width:142px;height:24px;line-height:24px;">10</div>
<div style="left:436px;top:742px;width:148px;height:24px;background:#f2f2f2"></div>
<div class="d" style="left:436px;top:743px;width:149px;height:24px;line-height:24px;">04/07/23 00:00</div>
<div style="left:585px;top:742px;width:119px;height:24px;background:#f2f2f2"></div>
<div class="d" style="left:585px;top:743px;width:120px;height:24px;line-height:24px;letter-spacing:-0.05px">PV 9144</div>
<div style="left:705px;top:742px;width:90px;height:24px;background:#f2f2f2"></div>
<div class="d" style="left:705px;top:743px;width:91px;height:24px;line-height:24px;">10</div>
<div style="left:796px;top:742px;width:169px;height:24px;background:#f2f2f2"></div>
<div class="d" style="left:796px;top:743px;width:170px;height:24px;line-height:24px;letter-spacing:0.28px">Cliente B</div>
<div style="left:966px;top:742px;width:147px;height:24px;background:#f2f2f2"></div>
<div class="d" style="left:966px;top:743px;width:148px;height:24px;line-height:24px;">13/07/23 15:00</div>
<div style="left:1114px;top:742px;width:148px;height:24px;background:#f2f2f2"></div>
<div class="d" style="left:1114px;top:743px;width:149px;height:24px;line-height:24px;">27/07/23 15:00</div>
<div style="left:1263px;top:742px;width:95px;height:24px;background:#f2f2f2"></div>
<div class="d" style="left:1263px;top:743px;width:96px;height:24px;line-height:24px;">14,0</div>
<div style="left:1359px;top:742px;width:93px;height:24px;background:#f2f2f2"></div>
<div class="d" style="left:1359px;top:743px;width:94px;height:24px;line-height:24px;">23,6</div>
<div style="left:1453px;top:742px;width:154px;height:24px;background:#c00000"></div>
<div class="st" style="left:1453px;top:743px;width:155px;height:24px;line-height:24px;color:#fff">Atrasada</div>
<div style="left:24px;top:766px;width:1584px;height:1px;background:#d4d4d4"></div>
<div style="left:25px;top:767px;width:50px;height:24px;background:#fff"></div>
<div class="da" style="left:25px;top:768px;width:51px;height:24px;line-height:24px;">22</div>
<div style="left:76px;top:767px;width:112px;height:24px;background:#fff"></div>
<div class="da" style="left:76px;top:768px;width:113px;height:24px;line-height:24px;">OP 1465</div>
<div style="left:189px;top:767px;width:104px;height:24px;background:#f2f2f2"></div>
<div class="d" style="left:189px;top:768px;width:105px;height:24px;line-height:24px;">A01</div>
<div style="left:294px;top:767px;width:141px;height:24px;background:#f2f2f2"></div>
<div class="d" style="left:294px;top:768px;width:142px;height:24px;line-height:24px;">10</div>
<div style="left:436px;top:767px;width:148px;height:24px;background:#f2f2f2"></div>
<div class="d" style="left:436px;top:768px;width:149px;height:24px;line-height:24px;">05/07/23 00:00</div>
<div style="left:585px;top:767px;width:119px;height:24px;background:#f2f2f2"></div>
<div class="d" style="left:585px;top:768px;width:120px;height:24px;line-height:24px;letter-spacing:-0.05px">PV 8640</div>
<div style="left:705px;top:767px;width:90px;height:24px;background:#f2f2f2"></div>
<div class="d" style="left:705px;top:768px;width:91px;height:24px;line-height:24px;">20</div>
<div style="left:796px;top:767px;width:169px;height:24px;background:#f2f2f2"></div>
<div class="d" style="left:796px;top:768px;width:170px;height:24px;line-height:24px;letter-spacing:0.28px">Cliente C</div>
<div style="left:966px;top:767px;width:147px;height:24px;background:#f2f2f2"></div>
<div class="d" style="left:966px;top:768px;width:148px;height:24px;line-height:24px;">20/07/23 10:00</div>
<div style="left:1114px;top:767px;width:148px;height:24px;background:#f2f2f2"></div>
<div class="d" style="left:1114px;top:768px;width:149px;height:24px;line-height:24px;">08/08/23 08:00</div>
<div style="left:1263px;top:767px;width:95px;height:24px;background:#f2f2f2"></div>
<div class="d" style="left:1263px;top:768px;width:96px;height:24px;line-height:24px;">18,9</div>
<div style="left:1359px;top:767px;width:93px;height:24px;background:#f2f2f2"></div>
<div class="d" style="left:1359px;top:768px;width:94px;height:24px;line-height:24px;">34,3</div>
<div style="left:1453px;top:767px;width:154px;height:24px;background:#c00000"></div>
<div class="st" style="left:1453px;top:768px;width:155px;height:24px;line-height:24px;color:#fff">Atrasada</div>
<div style="left:24px;top:791px;width:1584px;height:1px;background:#d4d4d4"></div>
<div style="left:24px;top:242px;width:1px;height:545px;background:#d4d4d4"></div>
<div style="left:75px;top:242px;width:1px;height:545px;background:#d4d4d4"></div>
<div style="left:188px;top:242px;width:1px;height:545px;background:#d4d4d4"></div>
<div style="left:293px;top:242px;width:1px;height:545px;background:#d4d4d4"></div>
<div style="left:435px;top:242px;width:1px;height:545px;background:#d4d4d4"></div>
<div style="left:584px;top:242px;width:1px;height:545px;background:#d4d4d4"></div>
<div style="left:704px;top:242px;width:1px;height:545px;background:#d4d4d4"></div>
<div style="left:795px;top:242px;width:1px;height:545px;background:#d4d4d4"></div>
<div style="left:965px;top:242px;width:1px;height:545px;background:#d4d4d4"></div>
<div style="left:1113px;top:242px;width:1px;height:545px;background:#d4d4d4"></div>
<div style="left:1262px;top:242px;width:1px;height:545px;background:#d4d4d4"></div>
<div style="left:1358px;top:242px;width:1px;height:545px;background:#d4d4d4"></div>
<div style="left:1452px;top:242px;width:1px;height:545px;background:#d4d4d4"></div>
<div style="left:1607px;top:242px;width:1px;height:545px;background:#d4d4d4"></div>
<div style="left:3px;top:1px;width:23px;height:28px;border:2px solid #117040;"></div>
<div style="left:21px;top:24px;width:7px;height:7px;background:#117040;border:1px solid #fff;"></div>
</body></html>
